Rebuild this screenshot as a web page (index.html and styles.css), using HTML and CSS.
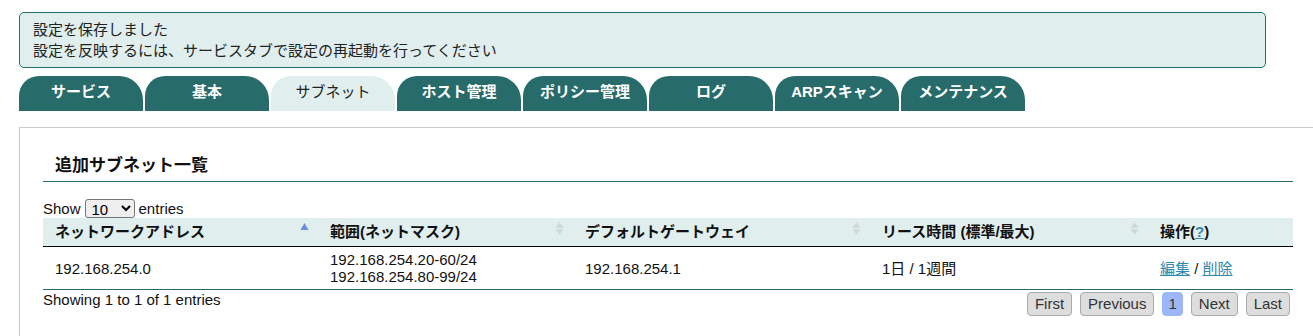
FILE: index.html
```html
<!DOCTYPE html>
<html lang="ja">
<head>
  <meta charset="UTF-8" />
  <title>サブネット</title>
  <link rel="stylesheet" href="styles.css">
</head>
<body>
  <div class="notice">
    <div>設定を保存しました</div>
    <div>設定を反映するには、サービスタブで設定の再起動を行ってください</div>
  </div>

  <ul class="tabs">
    <li class="tab">サービス</li>
    <li class="tab">基本</li>
    <li class="tab active">サブネット</li>
    <li class="tab">ホスト管理</li>
    <li class="tab">ポリシー管理</li>
    <li class="tab">ログ</li>
    <li class="tab">ARPスキャン</li>
    <li class="tab">メンテナンス</li>
  </ul>

  <div class="panel">
    <h3 class="section-title">追加サブネット一覧</h3>

    <div class="length">
      Show
      <select class="length-select">
        <option>10</option>
        <option>25</option>
        <option>50</option>
      </select>
      entries
    </div>

    <table class="grid">
      <thead>
        <tr>
          <th class="col-net">ネットワークアドレス
            <span class="sort"><svg width="9" height="13" viewBox="0 0 9 13"><path d="M4.5 1 L8.5 8 L0.5 8 Z" fill="#6d8fd9"/></svg></span>
          </th>
          <th class="col-range">範囲(ネットマスク)
            <span class="sort"><svg width="9" height="13" viewBox="0 0 9 13"><path d="M4.5 0.5 L8.5 5.8 L0.5 5.8 Z M4.5 12.5 L8.5 7.2 L0.5 7.2 Z" fill="#cdd7d7"/></svg></span>
          </th>
          <th class="col-gw">デフォルトゲートウェイ
            <span class="sort"><svg width="9" height="13" viewBox="0 0 9 13"><path d="M4.5 0.5 L8.5 5.8 L0.5 5.8 Z M4.5 12.5 L8.5 7.2 L0.5 7.2 Z" fill="#cdd7d7"/></svg></span>
          </th>
          <th class="col-lease">リース時間 (標準/最大)
            <span class="sort"><svg width="9" height="13" viewBox="0 0 9 13"><path d="M4.5 0.5 L8.5 5.8 L0.5 5.8 Z M4.5 12.5 L8.5 7.2 L0.5 7.2 Z" fill="#cdd7d7"/></svg></span>
          </th>
          <th class="col-op">操作(<a href="#">?</a>)</th>
        </tr>
      </thead>
      <tbody>
        <tr>
          <td>192.168.254.0</td>
          <td>192.168.254.20-60/24<br>192.168.254.80-99/24</td>
          <td>192.168.254.1</td>
          <td>1日 / 1週間</td>
          <td><a href="#">編集</a> / <a href="#">削除</a></td>
        </tr>
      </tbody>
    </table>

    <div class="table-footer">
      <div class="info">Showing 1 to 1 of 1 entries</div>
      <div class="paging">
        <a class="page-btn" href="#">First</a>
        <a class="page-btn" href="#">Previous</a>
        <a class="page-btn current" href="#">1</a>
        <a class="page-btn" href="#">Next</a>
        <a class="page-btn" href="#">Last</a>
      </div>
    </div>
  </div>
</body>
</html>
```

FILE: styles.css
```css
body {
  margin: 0;
  padding: 12px 0 0 19px;
  font-family: "Liberation Sans", "Noto Sans CJK JP", sans-serif;
  font-size: 15px;
  color: #111;
  background: #fff;
  overflow: hidden;
}
.notice {
  width: 1247px;
  box-sizing: border-box;
  border: 1px solid #276b6b;
  border-radius: 5px;
  background-color: #e0eeee;
  padding: 6px 13px 6px 13px;
  line-height: 21px;
  color: #222;
}
.tabs {
  list-style: none;
  margin: 8px 0 0 0;
  padding: 0;
  display: flex;
  gap: 2px;
}
.tab {
  width: 124px;
  height: 35px;
  box-sizing: border-box;
  padding-top: 5px;
  line-height: 22px;
  text-align: center;
  background-color: #276b6b;
  color: #fff;
  font-weight: bold;
  border-radius: 20px 24px 0 0;
}
.tab.active {
  background-color: #e0eeee;
  color: #222;
  font-weight: normal;
}
.panel {
  margin-top: 16px;
  border-top: 1px solid #cccccc;
  border-left: 1px solid #cccccc;
  padding: 26px 20px 20px 23px;
}
.section-title {
  margin: 0;
  padding: 0 12px 3px;
  font-size: 17px;
  line-height: 24px;
  border-bottom: 1px solid #276b6b;
}
.length {
  margin-top: 17px;
  height: 19px;
  line-height: 19px;
  display: flex;
  align-items: center;
  gap: 4px;
}
.length-select {
  font-family: "Liberation Sans", sans-serif;
  font-size: 15px;
  height: 19px;
  width: 50px;
  padding: 0 0 0 2px;
  border-radius: 3px;
}
.grid {
  width: 1250px;
  border-collapse: collapse;
}
.grid th {
  text-align: left;
  background-color: #e0eeee;
  padding: 4px 12px;
  line-height: 20px;
  border-bottom: 1px solid #000;
}
.grid td {
  padding: 4px 12px 4px;
  line-height: 17px;
  border-bottom: 1px solid #276b6b;
  height: 33px;
}
.sort {
  float: right;
  margin: 0 -3px 0 0;
  line-height: 0;
}
.col-net { width: 251px; }
.col-range { width: 231px; }
.col-gw { width: 273px; }
.col-lease { width: 254px; }
a {
  color: #3189ad;
}
.grid th a {
  color: #3189ad;
}
.table-footer {
  display: flex;
  justify-content: space-between;
  width: 1250px;
}
.info {
  padding-top: 1px;
  line-height: 17px;
}
.paging {
  display: flex;
  gap: 8px;
  margin: 2px 3px 0 0;
}
.page-btn {
  display: block;
  height: 24px;
  box-sizing: border-box;
  padding: 0 7px;
  line-height: 22px;
  border: 1px solid #aaaaaa;
  border-radius: 4px;
  background-color: #dddddd;
  color: #333;
  text-decoration: none;
}
.page-btn.current {
  padding: 0 5px;
  background-color: #9db6f7;
  border-color: #9db6f7;
}
```
